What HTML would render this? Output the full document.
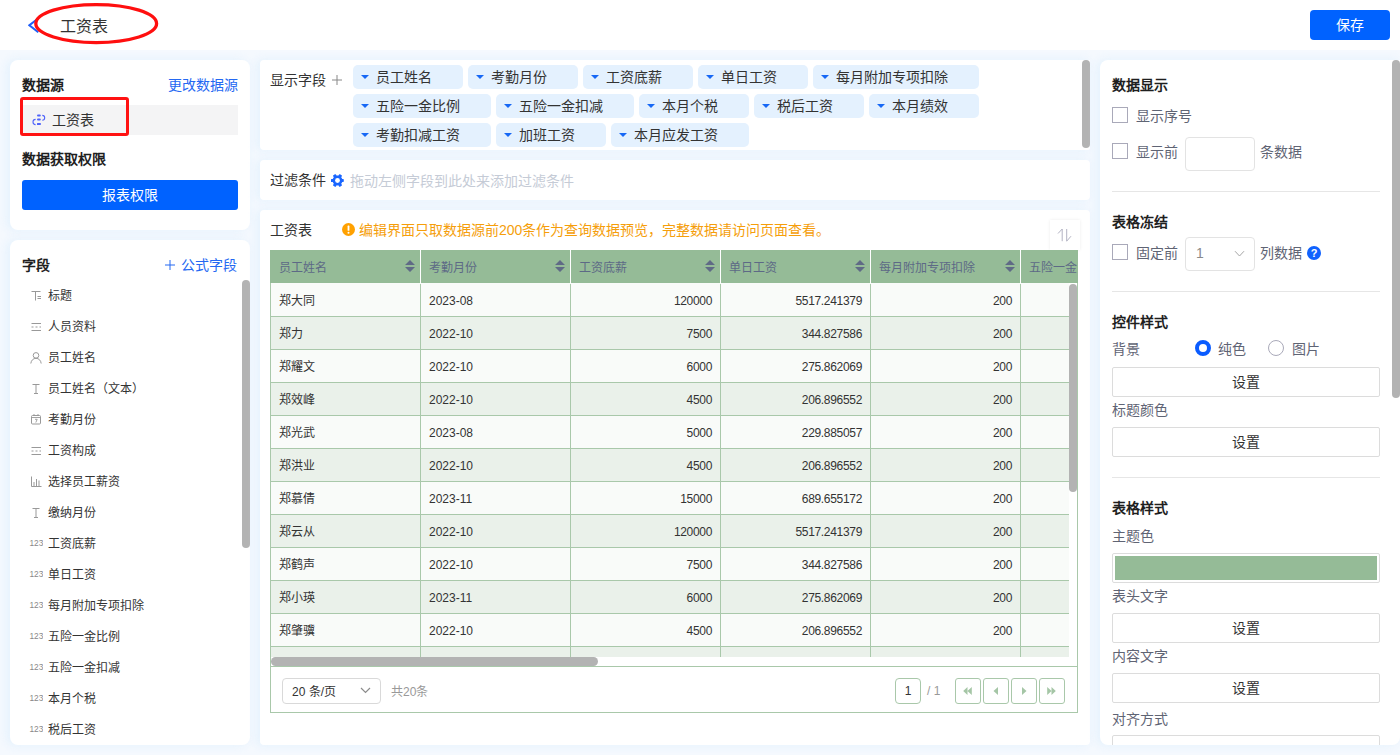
<!DOCTYPE html>
<html lang="zh-CN"><head><meta charset="utf-8">
<style>
*{box-sizing:border-box;margin:0;padding:0}
html,body{width:1400px;height:755px;overflow:hidden}
body{position:relative;background:#f5f9fe;font-family:"Liberation Sans",sans-serif;color:#333;font-size:14px}
.a{position:absolute;white-space:nowrap}
.panel{position:absolute;background:#fff;border-radius:8px;overflow:hidden;box-shadow:-3px 0 8px 1px rgba(220,238,254,.6)}
#hdr{position:absolute;left:0;top:0;width:1400px;height:50px;background:#fff}
.btn{position:absolute;background:#0062ff;color:#fff;border-radius:4px;text-align:center}
.b{font-weight:bold;color:#1f1f1f}
.tag{position:absolute;height:24px;background:#e4f1fe;border-radius:5px;font-size:14px;line-height:24px;padding-left:23px;color:#333}
.tag:before{content:"";position:absolute;left:8px;top:10px;border-left:4.3px solid transparent;border-right:4.3px solid transparent;border-top:4.5px solid #1768f5}
.li{position:absolute;left:48px;font-size:12px;line-height:14px;color:#333}
.ic{position:absolute;left:30px}
.th{font-size:12px;line-height:14px;color:#5d6986}
.td{font-size:12px;line-height:14px;color:#333}
.rt{font-size:14px;line-height:16px}
.rg{font-size:14px;line-height:16px;color:#5f6474}
</style></head><body>
<div id="hdr">
  <svg class="a" style="left:28px;top:18px" width="12" height="16" viewBox="0 0 12 16"><path d="M10.3 0.4 L1.4 7.3 L10.3 14.3" stroke="#1f5ef8" stroke-width="2" fill="none"/></svg>
  <div class="a" style="left:60px;top:17px;font-size:16px;line-height:20px;color:#333">工资表</div>
  <svg class="a" style="left:32px;top:1px" width="128" height="46" viewBox="0 0 128 46"><ellipse cx="64.2" cy="22.6" rx="60.4" ry="19" stroke="#ff0f0f" stroke-width="3.3" fill="none"/></svg>
  <div class="btn" style="left:1310px;top:10px;width:80px;height:30px;line-height:30px;font-size:14px">保存</div>
</div>

<!-- left panel 1 -->
<div class="panel" style="left:10px;top:60px;width:240px;height:170px">
  <div class="a b" style="left:12px;top:17px;font-size:14px;line-height:16px">数据源</div>
  <div class="a" style="right:12px;top:17px;font-size:14px;line-height:16px;color:#2468f2">更改数据源</div>
  <div class="a" style="left:12px;top:45px;width:216px;height:30px;background:#f4f4f5"></div>
  <svg class="a" style="left:22px;top:52px" width="14" height="14" viewBox="0 0 14 14"><g fill="#4f63fa"><rect x="5" y="2.4" width="3.8" height="2.2" rx="1"/><rect x="5" y="6.4" width="3.8" height="2.2" rx="1"/><rect x="5" y="10.9" width="3.8" height="2" rx=".5"/></g><path d="M10.3 3.4A2.4 2.4 0 0 1 10.3 8.2M3.6 7.4A2.6 2.6 0 0 0 3.6 12.6" stroke="#4f63fa" stroke-width="1.1" fill="none"/></svg>
  <div class="a" style="left:42px;top:52px;font-size:14px;line-height:16px;color:#333">工资表</div>
  <div class="a" style="left:10px;top:37px;width:109px;height:39px;border:3px solid #ff1212;border-radius:3px"></div>
  <div class="a b" style="left:12px;top:91px;font-size:14px;line-height:16px">数据获取权限</div>
  <div class="btn" style="left:12px;top:120px;width:216px;height:30px;line-height:30px;font-size:14px;border-radius:3px">报表权限</div>
</div>

<!-- left panel 2 -->
<div class="panel" style="left:10px;top:240px;width:240px;height:505px">
  <div class="a b" style="left:12px;top:17px;font-size:14px;line-height:16px">字段</div>
  <svg class="a" style="left:155px;top:20px" width="10" height="10" viewBox="0 0 10 10"><path d="M0 5H10M5 0V10" stroke="#2468f2" stroke-width="1" fill="none"/></svg><div class="a" style="left:171px;top:17px;font-size:14px;line-height:16px;color:#2468f2">公式字段</div>
  <div class="a" style="left:232px;top:40px;width:8px;height:268px;background:#b3b3b3;border-radius:4px"></div>
</div>
<div class="a" style="left:30px;top:289.5px;width:12px;height:12px;line-height:0"><svg width="12" height="12" viewBox="0 0 12 12"><path d="M1.5 1.5H10.5M5.5 1.5V10.5M7.5 6.5H11M7.5 8.5H11" stroke="#999" stroke-width="1" fill="none"/></svg></div>
<div class="li" style="top:288.5px">标题</div>
<div class="a" style="left:30px;top:320.5px;width:12px;height:12px;line-height:0"><svg width="12" height="12" viewBox="0 0 12 12"><path d="M1.5 2.5H11M1.5 9.5H11" stroke="#999" stroke-width="1" fill="none"/><path d="M1.5 6H11" stroke="#999" stroke-width="1" stroke-dasharray="2 2" fill="none"/></svg></div>
<div class="li" style="top:319.5px">人员资料</div>
<div class="a" style="left:30px;top:351.5px;width:12px;height:12px;line-height:0"><svg width="12" height="12" viewBox="0 0 12 12"><circle cx="6" cy="3.4" r="2.8" stroke="#999" stroke-width="1" fill="none"/><path d="M0.8 11.5C1.2 8.3 3.3 6.3 6 6.3S10.8 8.3 11.2 11.5" stroke="#999" stroke-width="1" fill="none"/></svg></div>
<div class="li" style="top:350.5px">员工姓名</div>
<div class="a" style="left:30px;top:382.5px;width:12px;height:12px;line-height:0"><svg width="12" height="12" viewBox="0 0 12 12"><path d="M2.5 1.5H9.5M6 1.5V10.5M4 10.5H8" stroke="#999" stroke-width="1" fill="none"/></svg></div>
<div class="li" style="top:381.5px">员工姓名（文本）</div>
<div class="a" style="left:30px;top:413.5px;width:12px;height:12px;line-height:0"><svg width="12" height="12" viewBox="0 0 12 12"><rect x="1.5" y="1.5" width="9" height="8.5" rx="1" stroke="#999" stroke-width="1" fill="none"/><path d="M1.5 3.5H10.5M4 0V2M8 0V2M5 5.3H7.2L5.8 8.5" stroke="#999" stroke-width="0.9" fill="none"/></svg></div>
<div class="li" style="top:412.5px">考勤月份</div>
<div class="a" style="left:30px;top:444.5px;width:12px;height:12px;line-height:0"><svg width="12" height="12" viewBox="0 0 12 12"><path d="M1.5 2.5H11M1.5 9.5H11" stroke="#999" stroke-width="1" fill="none"/><path d="M1.5 6H11" stroke="#999" stroke-width="1" stroke-dasharray="2 2" fill="none"/></svg></div>
<div class="li" style="top:443.5px">工资构成</div>
<div class="a" style="left:30px;top:475.5px;width:12px;height:12px;line-height:0"><svg width="12" height="12" viewBox="0 0 12 12"><path d="M1.5 0.5V10.5H11.5M4 6V10M6.5 3V10M9 4.5V10" stroke="#999" stroke-width="1" fill="none"/></svg></div>
<div class="li" style="top:474.5px">选择员工薪资</div>
<div class="a" style="left:30px;top:506.5px;width:12px;height:12px;line-height:0"><svg width="12" height="12" viewBox="0 0 12 12"><path d="M2.5 1.5H9.5M6 1.5V10.5M4 10.5H8" stroke="#999" stroke-width="1" fill="none"/></svg></div>
<div class="li" style="top:505.5px">缴纳月份</div>
<div class="a" style="left:29px;top:539.3px;width:14px;height:8px;line-height:0"><svg width="14" height="8" viewBox="0 0 14 8"><text x="0.5" y="7" font-size="8.3" fill="#888" font-family="Liberation Sans" letter-spacing="0">123</text></svg></div>
<div class="li" style="top:536.5px">工资底薪</div>
<div class="a" style="left:29px;top:570.3px;width:14px;height:8px;line-height:0"><svg width="14" height="8" viewBox="0 0 14 8"><text x="0.5" y="7" font-size="8.3" fill="#888" font-family="Liberation Sans" letter-spacing="0">123</text></svg></div>
<div class="li" style="top:567.5px">单日工资</div>
<div class="a" style="left:29px;top:601.3px;width:14px;height:8px;line-height:0"><svg width="14" height="8" viewBox="0 0 14 8"><text x="0.5" y="7" font-size="8.3" fill="#888" font-family="Liberation Sans" letter-spacing="0">123</text></svg></div>
<div class="li" style="top:598.5px">每月附加专项扣除</div>
<div class="a" style="left:29px;top:632.3px;width:14px;height:8px;line-height:0"><svg width="14" height="8" viewBox="0 0 14 8"><text x="0.5" y="7" font-size="8.3" fill="#888" font-family="Liberation Sans" letter-spacing="0">123</text></svg></div>
<div class="li" style="top:629.5px">五险一金比例</div>
<div class="a" style="left:29px;top:663.3px;width:14px;height:8px;line-height:0"><svg width="14" height="8" viewBox="0 0 14 8"><text x="0.5" y="7" font-size="8.3" fill="#888" font-family="Liberation Sans" letter-spacing="0">123</text></svg></div>
<div class="li" style="top:660.5px">五险一金扣减</div>
<div class="a" style="left:29px;top:694.3px;width:14px;height:8px;line-height:0"><svg width="14" height="8" viewBox="0 0 14 8"><text x="0.5" y="7" font-size="8.3" fill="#888" font-family="Liberation Sans" letter-spacing="0">123</text></svg></div>
<div class="li" style="top:691.5px">本月个税</div>
<div class="a" style="left:29px;top:725.3px;width:14px;height:8px;line-height:0"><svg width="14" height="8" viewBox="0 0 14 8"><text x="0.5" y="7" font-size="8.3" fill="#888" font-family="Liberation Sans" letter-spacing="0">123</text></svg></div>
<div class="li" style="top:722.5px">税后工资</div>

<!-- middle fields panel -->
<div class="panel" style="left:260px;top:60px;width:830px;height:90px;border-radius:4px 0 2px 4px">
  <div class="a" style="left:10px;top:12px;font-size:14px;line-height:16px;color:#333">显示字段</div><svg class="a" style="left:72px;top:15px" width="10" height="10" viewBox="0 0 10 10"><path d="M0 5H10M5 0V10" stroke="#888" stroke-width="1" fill="none"/></svg>
  <div class="a" style="left:822px;top:0;width:8px;height:88px;background:#b3b3b3;border-radius:4px"></div>
</div>
<div class="tag" style="left:353px;top:65px;width:110px">员工姓名</div>
<div class="tag" style="left:468px;top:65px;width:110px">考勤月份</div>
<div class="tag" style="left:583px;top:65px;width:110px">工资底薪</div>
<div class="tag" style="left:698px;top:65px;width:110px">单日工资</div>
<div class="tag" style="left:813px;top:65px;width:166px">每月附加专项扣除</div>
<div class="tag" style="left:353px;top:94px;width:138px">五险一金比例</div>
<div class="tag" style="left:496px;top:94px;width:138px">五险一金扣减</div>
<div class="tag" style="left:639px;top:94px;width:110px">本月个税</div>
<div class="tag" style="left:754px;top:94px;width:110px">税后工资</div>
<div class="tag" style="left:869px;top:94px;width:110px">本月绩效</div>
<div class="tag" style="left:353px;top:123px;width:138px">考勤扣减工资</div>
<div class="tag" style="left:496px;top:123px;width:110px">加班工资</div>
<div class="tag" style="left:611px;top:123px;width:138px">本月应发工资</div>

<!-- filter panel -->
<div class="panel" style="left:260px;top:160px;width:830px;height:40px;border-radius:4px">
  <div class="a" style="left:10px;top:12px;font-size:14px;line-height:16px;color:#333">过滤条件</div>
  <svg class="a" style="left:71px;top:14px" width="13" height="13" viewBox="-6.5 -6.5 13 13"><g fill="#1a66ff"><circle r="4.9"/><rect x="3.3" y="-1.5" width="3" height="3" rx=".7" transform="rotate(0)"/><rect x="3.6" y="-1.6" width="3" height="3.2" rx=".7" transform="rotate(60)"/><rect x="3.6" y="-1.6" width="3" height="3.2" rx=".7" transform="rotate(120)"/><rect x="3.6" y="-1.6" width="3" height="3.2" rx=".7" transform="rotate(180)"/><rect x="3.6" y="-1.6" width="3" height="3.2" rx=".7" transform="rotate(240)"/><rect x="3.6" y="-1.6" width="3" height="3.2" rx=".7" transform="rotate(300)"/></g><circle r="2.4" fill="#fff"/></svg>
  <div class="a" style="left:90px;top:13px;font-size:14px;line-height:16px;color:#c5cbd6">拖动左侧字段到此处来添加过滤条件</div>
</div>

<!-- table panel -->
<div class="panel" style="left:260px;top:210px;width:830px;height:535px;border-radius:4px">
  <div class="a" style="left:10px;top:12px;font-size:14px;line-height:16px;color:#333">工资表</div>
  <svg class="a" style="left:82px;top:13px" width="13" height="13" viewBox="0 0 13 13"><circle cx="6.5" cy="6.5" r="6.5" fill="#ffa100"/><rect x="5.6" y="2.6" width="1.8" height="5.2" rx=".6" fill="#fff"/><circle cx="6.5" cy="9.8" r="1" fill="#fff"/></svg>
  <div class="a" style="left:99px;top:12px;font-size:14px;line-height:16px;color:#f59e0b">编辑界面只取数据源前200条作为查询数据预览，完整数据请访问页面查看。</div>
  <div class="a" style="left:790px;top:10px;width:30px;height:30px;background:#fff;box-shadow:0 0 3px rgba(0,0,0,.08)"></div>
</div>
<div class="a" style="left:270px;top:250px;width:808px;height:463px;border:1px solid #a9c8aa;border-top:none"></div>
<div class="a" style="left:270px;top:250px;width:808px;height:33px;background:#95bb97;overflow:hidden">
<div class="a th" style="left:9px;top:11px">员工姓名</div>
<svg class="a" style="left:135px;top:10px" width="10" height="12" viewBox="0 0 10 12"><path d="M0 5L5 0L10 5Z M0 7L5 12L10 7Z" fill="#5f6a86"/></svg>
<div class="a" style="left:150px;top:0;width:1px;height:33px;background:#fff"></div>
<div class="a th" style="left:159px;top:11px">考勤月份</div>
<svg class="a" style="left:285px;top:10px" width="10" height="12" viewBox="0 0 10 12"><path d="M0 5L5 0L10 5Z M0 7L5 12L10 7Z" fill="#5f6a86"/></svg>
<div class="a" style="left:300px;top:0;width:1px;height:33px;background:#fff"></div>
<div class="a th" style="left:309px;top:11px">工资底薪</div>
<svg class="a" style="left:435px;top:10px" width="10" height="12" viewBox="0 0 10 12"><path d="M0 5L5 0L10 5Z M0 7L5 12L10 7Z" fill="#5f6a86"/></svg>
<div class="a" style="left:450px;top:0;width:1px;height:33px;background:#fff"></div>
<div class="a th" style="left:459px;top:11px">单日工资</div>
<svg class="a" style="left:585px;top:10px" width="10" height="12" viewBox="0 0 10 12"><path d="M0 5L5 0L10 5Z M0 7L5 12L10 7Z" fill="#5f6a86"/></svg>
<div class="a" style="left:600px;top:0;width:1px;height:33px;background:#fff"></div>
<div class="a th" style="left:609px;top:11px">每月附加专项扣除</div>
<svg class="a" style="left:735px;top:10px" width="10" height="12" viewBox="0 0 10 12"><path d="M0 5L5 0L10 5Z M0 7L5 12L10 7Z" fill="#5f6a86"/></svg>
<div class="a" style="left:750px;top:0;width:1px;height:33px;background:#fff"></div>
<div class="a th" style="left:759px;top:11px">五险一金比例</div>
</div>
<div class="a" style="left:271px;top:283px;width:798px;height:1px;background:#f9fbf9"></div>
<div class="a" style="left:271px;top:284px;width:798px;height:373px;overflow:hidden">
<div class="a" style="left:0;top:0px;width:800px;height:33px;background:#f9fbf9;border-bottom:1px solid #a9c8aa"></div>
<div class="a td" style="left:8px;top:10px">郑大同</div>
<div class="a td" style="left:158px;top:10px">2023-08</div>
<div class="a td" style="left:300px;width:141px;text-align:right;top:10px;letter-spacing:-0.32px">120000</div>
<div class="a td" style="left:450px;width:141px;text-align:right;top:10px;letter-spacing:-0.32px">5517.241379</div>
<div class="a td" style="left:600px;width:141px;text-align:right;top:10px;letter-spacing:-0.32px">200</div>
<div class="a" style="left:0;top:33px;width:800px;height:33px;background:#eaf1ea;border-bottom:1px solid #a9c8aa"></div>
<div class="a td" style="left:8px;top:43px">郑力</div>
<div class="a td" style="left:158px;top:43px">2022-10</div>
<div class="a td" style="left:300px;width:141px;text-align:right;top:43px;letter-spacing:-0.32px">7500</div>
<div class="a td" style="left:450px;width:141px;text-align:right;top:43px;letter-spacing:-0.32px">344.827586</div>
<div class="a td" style="left:600px;width:141px;text-align:right;top:43px;letter-spacing:-0.32px">200</div>
<div class="a" style="left:0;top:66px;width:800px;height:33px;background:#f9fbf9;border-bottom:1px solid #a9c8aa"></div>
<div class="a td" style="left:8px;top:76px">郑耀文</div>
<div class="a td" style="left:158px;top:76px">2022-10</div>
<div class="a td" style="left:300px;width:141px;text-align:right;top:76px;letter-spacing:-0.32px">6000</div>
<div class="a td" style="left:450px;width:141px;text-align:right;top:76px;letter-spacing:-0.32px">275.862069</div>
<div class="a td" style="left:600px;width:141px;text-align:right;top:76px;letter-spacing:-0.32px">200</div>
<div class="a" style="left:0;top:99px;width:800px;height:33px;background:#eaf1ea;border-bottom:1px solid #a9c8aa"></div>
<div class="a td" style="left:8px;top:109px">郑效峰</div>
<div class="a td" style="left:158px;top:109px">2022-10</div>
<div class="a td" style="left:300px;width:141px;text-align:right;top:109px;letter-spacing:-0.32px">4500</div>
<div class="a td" style="left:450px;width:141px;text-align:right;top:109px;letter-spacing:-0.32px">206.896552</div>
<div class="a td" style="left:600px;width:141px;text-align:right;top:109px;letter-spacing:-0.32px">200</div>
<div class="a" style="left:0;top:132px;width:800px;height:33px;background:#f9fbf9;border-bottom:1px solid #a9c8aa"></div>
<div class="a td" style="left:8px;top:142px">郑光武</div>
<div class="a td" style="left:158px;top:142px">2023-08</div>
<div class="a td" style="left:300px;width:141px;text-align:right;top:142px;letter-spacing:-0.32px">5000</div>
<div class="a td" style="left:450px;width:141px;text-align:right;top:142px;letter-spacing:-0.32px">229.885057</div>
<div class="a td" style="left:600px;width:141px;text-align:right;top:142px;letter-spacing:-0.32px">200</div>
<div class="a" style="left:0;top:165px;width:800px;height:33px;background:#eaf1ea;border-bottom:1px solid #a9c8aa"></div>
<div class="a td" style="left:8px;top:175px">郑洪业</div>
<div class="a td" style="left:158px;top:175px">2022-10</div>
<div class="a td" style="left:300px;width:141px;text-align:right;top:175px;letter-spacing:-0.32px">4500</div>
<div class="a td" style="left:450px;width:141px;text-align:right;top:175px;letter-spacing:-0.32px">206.896552</div>
<div class="a td" style="left:600px;width:141px;text-align:right;top:175px;letter-spacing:-0.32px">200</div>
<div class="a" style="left:0;top:198px;width:800px;height:33px;background:#f9fbf9;border-bottom:1px solid #a9c8aa"></div>
<div class="a td" style="left:8px;top:208px">郑慕倩</div>
<div class="a td" style="left:158px;top:208px">2023-11</div>
<div class="a td" style="left:300px;width:141px;text-align:right;top:208px;letter-spacing:-0.32px">15000</div>
<div class="a td" style="left:450px;width:141px;text-align:right;top:208px;letter-spacing:-0.32px">689.655172</div>
<div class="a td" style="left:600px;width:141px;text-align:right;top:208px;letter-spacing:-0.32px">200</div>
<div class="a" style="left:0;top:231px;width:800px;height:33px;background:#eaf1ea;border-bottom:1px solid #a9c8aa"></div>
<div class="a td" style="left:8px;top:241px">郑云从</div>
<div class="a td" style="left:158px;top:241px">2022-10</div>
<div class="a td" style="left:300px;width:141px;text-align:right;top:241px;letter-spacing:-0.32px">120000</div>
<div class="a td" style="left:450px;width:141px;text-align:right;top:241px;letter-spacing:-0.32px">5517.241379</div>
<div class="a td" style="left:600px;width:141px;text-align:right;top:241px;letter-spacing:-0.32px">200</div>
<div class="a" style="left:0;top:264px;width:800px;height:33px;background:#f9fbf9;border-bottom:1px solid #a9c8aa"></div>
<div class="a td" style="left:8px;top:274px">郑鹤声</div>
<div class="a td" style="left:158px;top:274px">2022-10</div>
<div class="a td" style="left:300px;width:141px;text-align:right;top:274px;letter-spacing:-0.32px">7500</div>
<div class="a td" style="left:450px;width:141px;text-align:right;top:274px;letter-spacing:-0.32px">344.827586</div>
<div class="a td" style="left:600px;width:141px;text-align:right;top:274px;letter-spacing:-0.32px">200</div>
<div class="a" style="left:0;top:297px;width:800px;height:33px;background:#eaf1ea;border-bottom:1px solid #a9c8aa"></div>
<div class="a td" style="left:8px;top:307px">郑小瑛</div>
<div class="a td" style="left:158px;top:307px">2023-11</div>
<div class="a td" style="left:300px;width:141px;text-align:right;top:307px;letter-spacing:-0.32px">6000</div>
<div class="a td" style="left:450px;width:141px;text-align:right;top:307px;letter-spacing:-0.32px">275.862069</div>
<div class="a td" style="left:600px;width:141px;text-align:right;top:307px;letter-spacing:-0.32px">200</div>
<div class="a" style="left:0;top:330px;width:800px;height:33px;background:#f9fbf9;border-bottom:1px solid #a9c8aa"></div>
<div class="a td" style="left:8px;top:340px">郑肇骥</div>
<div class="a td" style="left:158px;top:340px">2022-10</div>
<div class="a td" style="left:300px;width:141px;text-align:right;top:340px;letter-spacing:-0.32px">4500</div>
<div class="a td" style="left:450px;width:141px;text-align:right;top:340px;letter-spacing:-0.32px">206.896552</div>
<div class="a td" style="left:600px;width:141px;text-align:right;top:340px;letter-spacing:-0.32px">200</div>
<div class="a" style="left:0;top:363px;width:800px;height:33px;background:#eaf1ea;border-bottom:1px solid #a9c8aa"></div>
<div class="a td" style="left:8px;top:373px"></div>
<div class="a td" style="left:158px;top:373px"></div>
<div class="a td" style="left:300px;width:141px;text-align:right;top:373px;letter-spacing:-0.32px"></div>
<div class="a td" style="left:450px;width:141px;text-align:right;top:373px;letter-spacing:-0.32px"></div>
<div class="a td" style="left:600px;width:141px;text-align:right;top:373px;letter-spacing:-0.32px"></div>
<div class="a" style="left:149px;top:0;width:1px;height:373px;background:#a9c8aa"></div>
<div class="a" style="left:299px;top:0;width:1px;height:373px;background:#a9c8aa"></div>
<div class="a" style="left:449px;top:0;width:1px;height:373px;background:#a9c8aa"></div>
<div class="a" style="left:599px;top:0;width:1px;height:373px;background:#a9c8aa"></div>
<div class="a" style="left:749px;top:0;width:1px;height:373px;background:#a9c8aa"></div>
</div>
<svg class="a" style="left:1050px;top:220px" width="30" height="30" viewBox="0 0 30 30"><path d="M12.2 9V21.2M12.2 9L8 13.5M16.7 21.2V9M16.7 21.2L21 16.2" stroke="#b3b3c3" stroke-width="1" fill="none"/></svg>
<div class="a" style="left:1069px;top:284px;width:8px;height:208px;background:#b3b3b3;border-radius:4px"></div>
<div class="a" style="left:271px;top:657px;width:798px;height:9px;background:#fff"></div>
<div class="a" style="left:271px;top:657px;width:327px;height:9px;background:#b3b3b3;border-radius:4.5px"></div>
<div class="a" style="left:270px;top:666px;width:808px;height:1px;background:#a9c8aa"></div>
<div class="a" style="left:282px;top:678px;width:99px;height:26px;border:1px solid #d9d9d9;border-radius:4px"></div>
<div class="a" style="left:292px;top:685px;font-size:12px;line-height:14px;color:#333">20 条/页</div>
<svg class="a" style="left:360px;top:687px" width="11" height="7" viewBox="0 0 11 7"><path d="M1 1L5.5 5.5L10 1" stroke="#8c8c8c" stroke-width="1.2" fill="none"/></svg>
<div class="a" style="left:391px;top:685px;font-size:12px;line-height:14px;color:#999">共20条</div>
<div class="a" style="left:895px;top:678px;width:26px;height:26px;border:1px solid #a9c8aa;border-radius:4px;text-align:center;font-size:12px;line-height:24px;color:#333">1</div>
<div class="a" style="left:927px;top:684px;font-size:12px;line-height:14px;color:#999">/ 1</div>
<div class="a" style="left:955px;top:678px;width:26px;height:26px;border:1px solid #a9c8aa;border-radius:3px"></div>
<svg class="a" style="left:955px;top:678px" width="26" height="26" viewBox="-6 -6.5 26 26"><path d="M6.5 2.5L2.2 6.5L6.5 10.5Z M10.8 2.5L6.5 6.5L10.8 10.5Z" fill="#a5c6a6"/></svg>
<div class="a" style="left:983px;top:678px;width:26px;height:26px;border:1px solid #a9c8aa;border-radius:3px"></div>
<svg class="a" style="left:983px;top:678px" width="26" height="26" viewBox="-6 -6.5 26 26"><path d="M9 2.5L4.5 6.5L9 10.5Z" fill="#a5c6a6"/></svg>
<div class="a" style="left:1011px;top:678px;width:26px;height:26px;border:1px solid #a9c8aa;border-radius:3px"></div>
<svg class="a" style="left:1011px;top:678px" width="26" height="26" viewBox="-6 -6.5 26 26"><path d="M5 2.5L9.5 6.5L5 10.5Z" fill="#a5c6a6"/></svg>
<div class="a" style="left:1039px;top:678px;width:26px;height:26px;border:1px solid #a9c8aa;border-radius:3px"></div>
<svg class="a" style="left:1039px;top:678px" width="26" height="26" viewBox="-6 -6.5 26 26"><path d="M2.2 2.5L6.5 6.5L2.2 10.5Z M6.5 2.5L10.8 6.5L6.5 10.5Z" fill="#a5c6a6"/></svg>

<!-- right panel -->
<div class="panel" style="left:1100px;top:60px;width:300px;height:685px;border-radius:8px 0 8px 8px">
  <div class="a" style="left:292px;top:0;width:8px;height:338px;background:#b3b3b3;border-radius:4px"></div>
</div>
<div class="a b rt" style="left:1112px;top:77px;">数据显示</div>
<div class="a" style="left:1112px;top:107px;width:16px;height:16px;border:1px solid #a9a9b9;background:#fff"></div>
<div class="a rg" style="left:1136px;top:108px;">显示序号</div>
<div class="a" style="left:1112px;top:143px;width:16px;height:16px;border:1px solid #a9a9b9;background:#fff"></div>
<div class="a rg" style="left:1136px;top:144px;">显示前</div>
<div class="a" style="left:1185px;top:137px;width:70px;height:34px;border:1px solid #e3e3e3;border-radius:4px"></div>
<div class="a rg" style="left:1260px;top:144px;">条数据</div>
<div class="a" style="left:1112px;top:191px;width:268px;height:1px;background:#e6e6e6"></div>
<div class="a b rt" style="left:1112px;top:214px;">表格冻结</div>
<div class="a" style="left:1112px;top:244px;width:16px;height:16px;border:1px solid #a9a9b9;background:#fff"></div>
<div class="a rg" style="left:1136px;top:245px;">固定前</div>
<div class="a" style="left:1185px;top:237px;width:70px;height:34px;border:1px solid #e3e3e3;border-radius:4px"></div>
<div class="a rg" style="left:1196px;top:245px;color:#8a8a8a">1</div>
<svg class="a" style="left:1234px;top:250px" width="11" height="8" viewBox="0 0 11 8"><path d="M1 1.2L5.5 6L10 1.2" stroke="#a5a5a5" stroke-width="1" fill="none"/></svg>
<div class="a rg" style="left:1260px;top:245px;">列数据</div>
<svg class="a" style="left:1307px;top:246px" width="14" height="14" viewBox="0 0 14 14"><circle cx="7" cy="7" r="7" fill="#1062fe"/><text x="7" y="11" text-anchor="middle" font-size="11" font-weight="bold" fill="#fff" font-family="Liberation Sans">?</text></svg>
<div class="a" style="left:1112px;top:291px;width:268px;height:1px;background:#e6e6e6"></div>
<div class="a b rt" style="left:1112px;top:314px;">控件样式</div>
<div class="a rg" style="left:1112px;top:341px;">背景</div>
<div class="a" style="left:1195px;top:340px;width:16px;height:16px;border:4px solid #0a5cff;border-radius:50%;background:#fff"></div>
<div class="a rg" style="left:1218px;top:341px;">纯色</div>
<div class="a" style="left:1268px;top:340px;width:16px;height:16px;border:1px solid #a9a9b9;border-radius:50%;background:#fff"></div>
<div class="a rg" style="left:1292px;top:341px;">图片</div>
<div class="a" style="left:1112px;top:367px;width:268px;height:30px;border:1px solid #dcdcdc;border-radius:2px;text-align:center;font-size:14px;line-height:28px;color:#333">设置</div>
<div class="a rg" style="left:1112px;top:402px;">标题颜色</div>
<div class="a" style="left:1112px;top:427px;width:268px;height:30px;border:1px solid #dcdcdc;border-radius:2px;text-align:center;font-size:14px;line-height:28px;color:#333">设置</div>
<div class="a" style="left:1112px;top:477px;width:268px;height:1px;background:#e6e6e6"></div>
<div class="a b rt" style="left:1112px;top:500px;">表格样式</div>
<div class="a rg" style="left:1112px;top:528px;">主题色</div>
<div class="a" style="left:1112px;top:553px;width:268px;height:30px;border:1px solid #dcdcdc;border-radius:2px;padding:2px"><div style="width:100%;height:100%;background:#95bb97"></div></div>
<div class="a rg" style="left:1112px;top:588px;">表头文字</div>
<div class="a" style="left:1112px;top:613px;width:268px;height:30px;border:1px solid #dcdcdc;border-radius:2px;text-align:center;font-size:14px;line-height:28px;color:#333">设置</div>
<div class="a rg" style="left:1112px;top:648px;">内容文字</div>
<div class="a" style="left:1112px;top:673px;width:268px;height:30px;border:1px solid #dcdcdc;border-radius:2px;text-align:center;font-size:14px;line-height:28px;color:#333">设置</div>
<div class="a rg" style="left:1112px;top:711px;">对齐方式</div>
<div class="a" style="left:1100px;top:0;width:300px;height:745px;overflow:hidden;pointer-events:none"><div class="a" style="left:12px;top:735px;width:268px;height:30px;border:1px solid #dcdcdc;border-radius:2px"></div></div>
</body></html>
